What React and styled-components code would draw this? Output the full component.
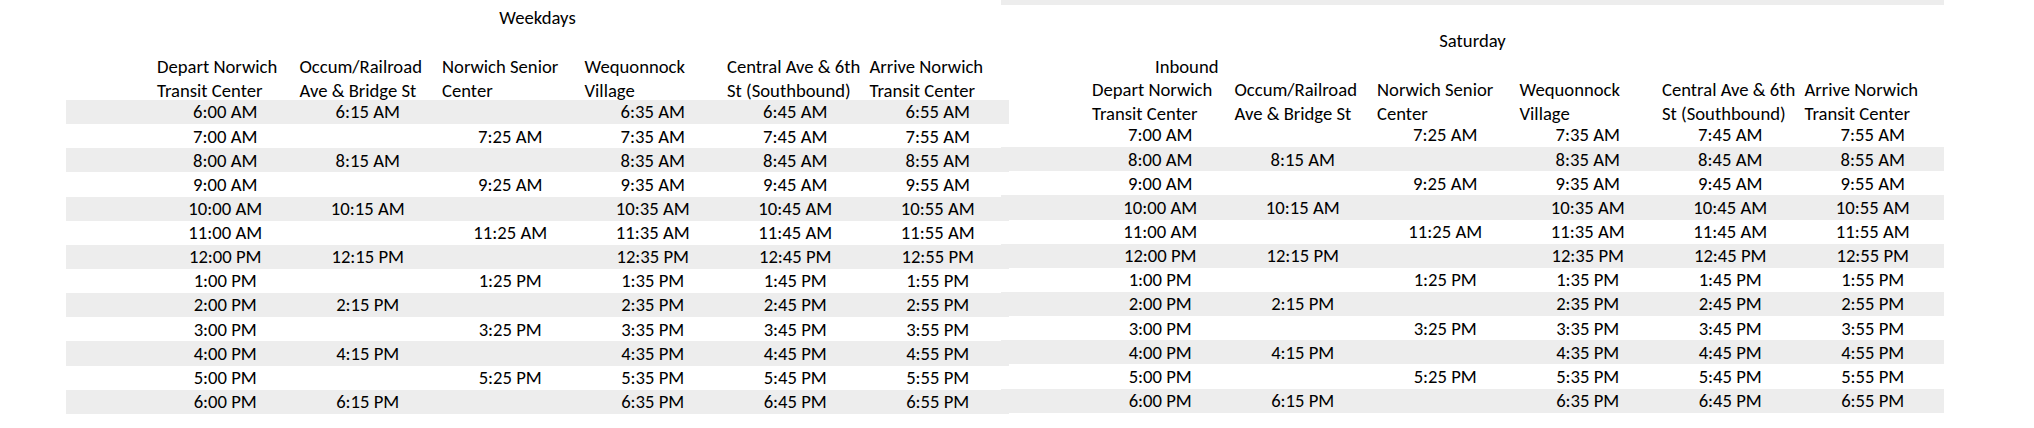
import styled, { createGlobalStyle } from 'styled-components';

const GlobalStyle = createGlobalStyle`
  body {
    margin: 0;
    background: #fff;
    color: #000;
    font-family: Carlito, Calibri, "Liberation Sans", sans-serif;
    font-size: 18.67px;
  }
`;

const STOPS = [
  'Depart Norwich Transit Center',
  'Occum/Railroad Ave & Bridge St',
  'Norwich Senior Center',
  'Wequonnock Village',
  'Central Ave & 6th St (Southbound)',
  'Arrive Norwich Transit Center',
];

const HOURS = [6, 7, 8, 9, 10, 11, 12, 13, 14, 15, 16, 17, 18];

const fmt = (h, m) => {
  const suffix = h >= 12 ? 'PM' : 'AM';
  const hr = h > 12 ? h - 12 : h;
  return `${hr}:${String(m).padStart(2, '0')} ${suffix}`;
};

// every even trip stops at Occum, every odd one at the senior center
const buildTrip = (h) => {
  const viaOccum = h % 2 === 0;
  return {
    shaded: viaOccum,
    times: [fmt(h, 0), viaOccum ? fmt(h, 15) : '', viaOccum ? '' : fmt(h, 25), fmt(h, 35), fmt(h, 45), fmt(h, 55)],
  };
};

const Page = styled.main`
  display: flex;
  align-items: flex-start;
  padding-left: 66px;
`;

const Sheet = styled.section`
  width: 943px;
  flex: none;
  margin-top: ${(p) => p.$top}px;
  margin-left: ${(p) => p.$shift || 0}px;
`;

const Grid = styled.div`
  display: grid;
  grid-template-columns: 88px repeat(6, 142.5px);
  grid-template-rows: ${(p) => p.$h || 24.15}px;
  align-items: end;
  height: ${(p) => p.$h || 24.15}px;
  background: ${(p) => (p.$shaded ? '#ededed' : 'transparent')};
`;

const Title = styled.div`
  grid-column: 1 / -1;
  text-align: center;
  line-height: 22.76px;
`;

const Direction = styled.div`
  grid-column: 2;
  text-align: right;
  padding-right: 13px;
  line-height: 20.16px;
`;

const HeadCell = styled.div`
  align-self: end;
  margin-bottom: -2px;
  padding-left: 3px;
  line-height: 23.4px;
`;

const Time = styled.div`
  text-align: center;
  line-height: 22.76px;
  white-space: nowrap;
`;

const Spacer = styled.div`
  height: ${(p) => p.$h}px;
`;

function TripRow({ trip }) {
  return (
    <Grid $shaded={trip.shaded}>
      <span />
      {trip.times.map((t, i) => (
        <Time key={i}>{t}</Time>
      ))}
    </Grid>
  );
}

function HeaderRow({ height }) {
  return (
    <Grid $h={height}>
      <span />
      {STOPS.map((s) => (
        <HeadCell key={s}>{s}</HeadCell>
      ))}
    </Grid>
  );
}

function App() {
  const weekdays = HOURS.map(buildTrip);
  const saturday = HOURS.slice(1).map(buildTrip);

  return (
    <>
      <GlobalStyle />
      <Page>
        <Sheet $top={5.85}>
          <Grid>
            <Title>Weekdays</Title>
          </Grid>
          <Spacer $h={23} />
          <HeaderRow height={47} />
          {weekdays.map((t) => (
            <TripRow key={t.times[0]} trip={t} />
          ))}
        </Sheet>

        <Sheet $top={-19.15} $shift={-8}>
          <Grid $shaded />
          <Spacer $h={24} />
          <Grid $h={24}>
            <Title>Saturday</Title>
          </Grid>
          <Grid $h={24}>
            <Direction>Inbound</Direction>
          </Grid>
          <HeaderRow height={46} />
          {saturday.map((t) => (
            <TripRow key={t.times[0]} trip={t} />
          ))}
        </Sheet>
      </Page>
    </>
  );
}

export default App;
